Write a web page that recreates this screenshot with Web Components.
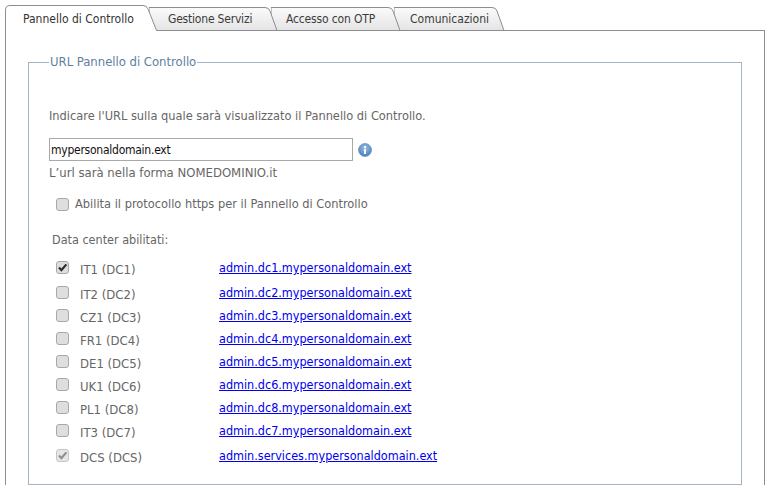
<!DOCTYPE html>
<html lang="it">
<head>
<meta charset="utf-8">
<title>Pannello di Controllo</title>
<style>
  html, body { margin: 0; background: #fff; }
  body { font: 12px "DejaVu Sans Condensed", "DejaVu Sans", sans-serif; font-stretch: condensed; color: #666; overflow: hidden; }
</style>
</head>
<body>

<cp-page>
  <cp-tabs slot="tabs">
    <cp-tab active w="153" pad="18" label="Pannello di Controllo"></cp-tab>
    <cp-tab w="131" pad="19" track="-.2" label="Gestione Servizi"></cp-tab>
    <cp-tab w="132" pad="15" track="-.15" label="Accesso con OTP"></cp-tab>
    <cp-tab w="113" pad="16" label="Comunicazioni"></cp-tab>
  </cp-tabs>

  <cp-fieldset legend="URL Pannello di Controllo">
    <p class="intro">Indicare l'URL sulla quale sarà visualizzato il Pannello di Controllo.</p>
    <cp-url-field value="mypersonaldomain.ext"></cp-url-field>
    <p class="hint">L’url sarà nella forma NOMEDOMINIO.it</p>
    <cp-check-line label="Abilita il protocollo https per il Pannello di Controllo"></cp-check-line>
    <p class="dc-title">Data center abilitati:</p>
    <cp-dc-row checked h="27" label="IT1 (DC1)" href="admin.dc1.mypersonaldomain.ext"></cp-dc-row>
    <cp-dc-row h="23" label="IT2 (DC2)" href="admin.dc2.mypersonaldomain.ext"></cp-dc-row>
    <cp-dc-row h="23" label="CZ1 (DC3)" href="admin.dc3.mypersonaldomain.ext"></cp-dc-row>
    <cp-dc-row h="23" label="FR1 (DC4)" href="admin.dc4.mypersonaldomain.ext"></cp-dc-row>
    <cp-dc-row h="23" label="DE1 (DC5)" href="admin.dc5.mypersonaldomain.ext"></cp-dc-row>
    <cp-dc-row h="23" label="UK1 (DC6)" href="admin.dc6.mypersonaldomain.ext"></cp-dc-row>
    <cp-dc-row h="23" label="PL1 (DC8)" href="admin.dc8.mypersonaldomain.ext"></cp-dc-row>
    <cp-dc-row h="23" label="IT3 (DC7)" href="admin.dc7.mypersonaldomain.ext"></cp-dc-row>
    <cp-dc-row checked disabled h="27" label="DCS (DCS)" href="admin.services.mypersonaldomain.ext"></cp-dc-row>
  </cp-fieldset>
</cp-page>

<script>
// Pagina: striscia dei tab sopra, pannello con bordo sotto
class CpPage extends HTMLElement {
  constructor() {
    super();
    this.attachShadow({ mode: 'open' }).innerHTML = `
      <style>
        :host { display: block; padding: 5px 5px 0; width: 760px; }
        .panel {
          border: 1px solid #8c8c92;
          border-bottom: 0;
          margin-top: -1px;
          height: 455px;
          padding: 23px 22px 0;
          box-sizing: border-box;
        }
      </style>
      <slot name="tabs"></slot>
      <div class="panel"><slot></slot></div>`;
  }
}

class CpTabs extends HTMLElement {
  constructor() {
    super();
    this.attachShadow({ mode: 'open' }).innerHTML = `
      <style>
        :host { display: flex; height: 26px; align-items: flex-end; position: relative; }
        ::slotted(cp-tab) { margin-left: -9px; }
        ::slotted(cp-tab:first-child) { margin-left: 0; }
      </style>
      <slot></slot>`;
  }
  connectedCallback() {
    // il tab a sinistra copre il bordo di quello dopo
    [...this.children].forEach((t, i) => { t.style.zIndex = 10 - i; });
  }
}

class CpTab extends HTMLElement {
  constructor() {
    super();
    this.attachShadow({ mode: 'open' });
  }
  connectedCallback() {
    const w = +this.getAttribute('w');
    const pad = this.getAttribute('pad');
    const track = this.getAttribute('track') || 0;
    const active = this.hasAttribute('active');
    const h = active ? 26 : 24;
    const id = active ? 'a' : 'g';
    // angolo arrotondato in alto, lato destro inclinato
    const d = active
      ? `M.5 ${h} V5 Q.5 .5 5 .5 H${w - 15} Q${w - 11} .5 ${w - 10} 4 L${w - 1.5} ${h - .5}`
      : `M0 ${h - .5} V.5 H${w - 15} Q${w - 11} .5 ${w - 10} 4 L${w - 3} ${h - .5} Z`;
    const fill = active
      ? `M.5 ${h} V5 Q.5 .5 5 .5 H${w - 15} Q${w - 11} .5 ${w - 10} 4 L${w - 1.5} ${h} Z`
      : d;
    this.shadowRoot.innerHTML = `
      <style>
        :host {
          display: block; position: relative;
          width: ${w}px; height: ${h}px;
          font-size: 12px; color: ${active ? '#333' : '#3c3c3c'};
        }
        svg { position: absolute; inset: 0; }
        span { position: relative; display: block; padding-left: ${pad}px; letter-spacing: ${track}px; line-height: ${active ? 28 : 24}px; }
      </style>
      <svg width="${w}" height="${h}">
        <defs><linearGradient id="${id}" x1="0" y1="0" x2="0" y2="1">
          <stop offset="0" stop-color="${active ? '#fff' : '#fbfbfb'}"/>
          <stop offset="1" stop-color="${active ? '#fff' : '#e4e4e4'}"/>
        </linearGradient></defs>
        <path d="${fill}" fill="url(#${id})"/>
        <path d="${d}" fill="none" stroke="#8c8c92"/>
      </svg>
      <span>${this.getAttribute('label')}</span>`;
  }
}

class CpFieldset extends HTMLElement {
  constructor() {
    super();
    this.attachShadow({ mode: 'open' });
  }
  connectedCallback() {
    this.shadowRoot.innerHTML = `
      <style>
        :host { display: block; }
        fieldset {
          margin: 0; height: 431px; box-sizing: border-box;
          border: 1px solid #a4b4c6;
          padding: 0 0 0 20px; min-width: 0;
          font-size: 12.7px;
        }
        legend { margin-left: 0; padding: 0 1px; color: #5f7f9f; font-size: 13px; letter-spacing: -.03px; line-height: 16px; }
        ::slotted(p) { margin: 0; }
        ::slotted(.intro) { padding-top: 38px; line-height: 16px; }
        ::slotted(.hint) { line-height: 16px; padding-top: 4px; font-size: 13px; }
        ::slotted(.dc-title) { line-height: 16px; padding: 18px 0 6px 3px; font-size: 12.5px; }
      </style>
      <fieldset>
        <legend>${this.getAttribute('legend')}</legend>
        <slot></slot>
      </fieldset>`;
  }
}

class CpUrlField extends HTMLElement {
  constructor() {
    super();
    this.attachShadow({ mode: 'open' });
  }
  connectedCallback() {
    this.shadowRoot.innerHTML = `
      <style>
        :host { display: flex; align-items: center; gap: 5px; margin-top: 14px; }
        input {
          width: 304px; height: 23px; box-sizing: border-box; margin: 0;
          border: 1px solid #a9a9a9; padding: 0 1px; outline: 0;
          font: 12px "DejaVu Sans Condensed", "DejaVu Sans", sans-serif; font-stretch: condensed;
          letter-spacing: -.25px; color: #111;
        }
        svg { display: block; }
      </style>
      <input type="text" value="${this.getAttribute('value')}">
      <svg width="14" height="14" viewBox="0 0 14 14">
        <defs><radialGradient id="b" cx=".5" cy=".35" r=".7">
          <stop offset="0" stop-color="#9cc0e8"/>
          <stop offset="1" stop-color="#3f78bb"/>
        </radialGradient></defs>
        <circle cx="7" cy="7" r="6.5" fill="url(#b)" stroke="#6f97c4" stroke-width=".8"/>
        <rect x="6" y="3" width="2" height="2" fill="#fff"/>
        <rect x="6" y="6" width="2" height="5" fill="#fff"/>
      </svg>`;
  }
}

class CpCheck extends HTMLElement {
  constructor() {
    super();
    this.attachShadow({ mode: 'open' });
  }
  connectedCallback() {
    const checked = this.hasAttribute('checked');
    const dis = this.hasAttribute('disabled');
    const tick = dis ? '#8f8f8f' : '#2c2c2c';
    this.shadowRoot.innerHTML = `
      <style>
        :host { display: block; width: 13px; height: 13px; }
        svg { display: block; }
      </style>
      <svg width="13" height="13" viewBox="0 0 13 13">
        <rect x=".5" y=".5" width="12" height="12" rx="2.5" fill="${dis ? '#e6e6e6' : '#dedede'}" stroke="${dis ? '#c6c6c6' : '#a8a8a8'}"/>
        ${checked ? `<path d="M3 6.6 L5.4 9.2 L10.4 3.4" fill="none" stroke="${tick}" stroke-width="2.2"/>` : ''}
      </svg>`;
  }
}

class CpCheckLine extends HTMLElement {
  constructor() {
    super();
    this.attachShadow({ mode: 'open' });
  }
  connectedCallback() {
    this.shadowRoot.innerHTML = `
      <style>
        :host { display: flex; align-items: center; gap: 6px; padding: 13px 0 0 7px; line-height: 20px; }
      </style>
      <cp-check></cp-check>
      <span>${this.getAttribute('label')}</span>`;
  }
}

class CpDcRow extends HTMLElement {
  constructor() {
    super();
    this.attachShadow({ mode: 'open' });
  }
  connectedCallback() {
    const attrs = ['checked', 'disabled'].filter(a => this.hasAttribute(a)).join(' ');
    this.shadowRoot.innerHTML = `
      <style>
        :host {
          display: grid; grid-template-columns: 24px 139px auto;
          align-items: center; padding-left: 7px;
          height: ${this.getAttribute('h')}px;
        }
        cp-check { margin-top: -1px; }
        span { font-size: 13px; padding-top: 3px; }
        a { color: #0000ee; text-decoration: underline; font-size: 12.5px; }
      </style>
      <cp-check ${attrs}></cp-check>
      <span>${this.getAttribute('label')}</span>
      <a href="#">${this.getAttribute('href')}</a>`;
  }
}

customElements.define('cp-page', CpPage);
customElements.define('cp-tabs', CpTabs);
customElements.define('cp-tab', CpTab);
customElements.define('cp-fieldset', CpFieldset);
customElements.define('cp-url-field', CpUrlField);
customElements.define('cp-check', CpCheck);
customElements.define('cp-check-line', CpCheckLine);
customElements.define('cp-dc-row', CpDcRow);
</script>
</body>
</html>
